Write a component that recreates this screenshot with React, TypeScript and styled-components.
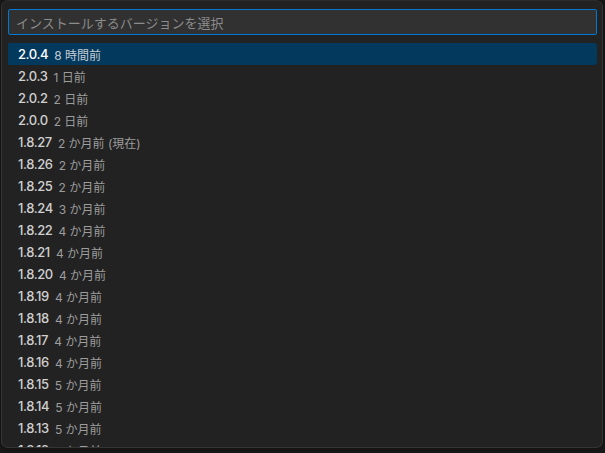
import React from "react";
import styled, { createGlobalStyle } from "styled-components";

const Global = createGlobalStyle`
  html, body { margin: 0; padding: 0; background: #181818; overflow: hidden; }
  body { font-family: Inter, "Noto Sans CJK JP", "Noto Sans", sans-serif; }
`;

const Screen = styled.div`
  width: 605px;
  height: 453px;
  background: #1a1a1a;
  overflow: hidden;
`;

const Panel = styled.div`
  box-sizing: border-box;
  margin-left: 1px;
  width: 602px;
  height: 448px;
  background: #222222;
  border: 1px solid #353535;
  border-top-color: #2c2c2c;
  border-radius: 7px;
  padding: 8px 4px 0 6px;
  display: flex;
  flex-direction: column;
  overflow: hidden;
  box-shadow: 0 0 8px 2px rgba(0, 0, 0, 0.36);
`;

const InputBox = styled.div`
  box-sizing: border-box;
  height: 26px;
  width: 589px;
  background: #313131;
  border: 1px solid #0078d4;
  border-radius: 2px;
  display: flex;
  align-items: center;
  padding: 0 7px;
  font-size: 13px;
  color: #8b8b8b;
`;

const List = styled.div`
  margin-top: 8px;
  flex: 1;
  overflow: hidden;
  display: flex;
  flex-direction: column;
`;

const Row = styled.div<{ $active?: boolean }>`
  box-sizing: border-box;
  flex: 0 0 22px;
  height: 22px;
  width: 590px;
  margin-left: -1px;
  display: flex;
  align-items: center;
  padding-left: 11px;
  border-radius: 3px;
  background: ${(p) => (p.$active ? "#04395e" : "transparent")};
`;

const Label = styled.span<{ $active?: boolean }>`
  font-size: 13px;
  font-weight: 500;
  letter-spacing: -0.4px;
  color: ${(p) => (p.$active ? "#ffffff" : "#d0d0d0")};
`;

const Desc = styled.span<{ $active?: boolean }>`
  margin-left: 6px;
  font-size: 12px;
  color: ${(p) => (p.$active ? "#c4cdd4" : "#9d9d9d")};
`;

const items: [string, string][] = [
  ["2.0.4", "8 時間前"],
  ["2.0.3", "1 日前"],
  ["2.0.2", "2 日前"],
  ["2.0.0", "2 日前"],
  ["1.8.27", "2 か月前 (現在)"],
  ["1.8.26", "2 か月前"],
  ["1.8.25", "2 か月前"],
  ["1.8.24", "3 か月前"],
  ["1.8.22", "4 か月前"],
  ["1.8.21", "4 か月前"],
  ["1.8.20", "4 か月前"],
  ["1.8.19", "4 か月前"],
  ["1.8.18", "4 か月前"],
  ["1.8.17", "4 か月前"],
  ["1.8.16", "4 か月前"],
  ["1.8.15", "5 か月前"],
  ["1.8.14", "5 か月前"],
  ["1.8.13", "5 か月前"],
  ["1.8.12", "5 か月前"],
  ["1.8.11", "5 か月前"],
];

export default function App() {
  return (
    <Screen>
      <Global />
      <Panel>
        <InputBox>インストールするバージョンを選択</InputBox>
        <List>
          {items.map(([v, d], i) => (
            <Row key={v} $active={i === 0}>
              <Label $active={i === 0}>{v}</Label>
              <Desc $active={i === 0}>{d}</Desc>
            </Row>
          ))}
        </List>
      </Panel>
    </Screen>
  );
}
